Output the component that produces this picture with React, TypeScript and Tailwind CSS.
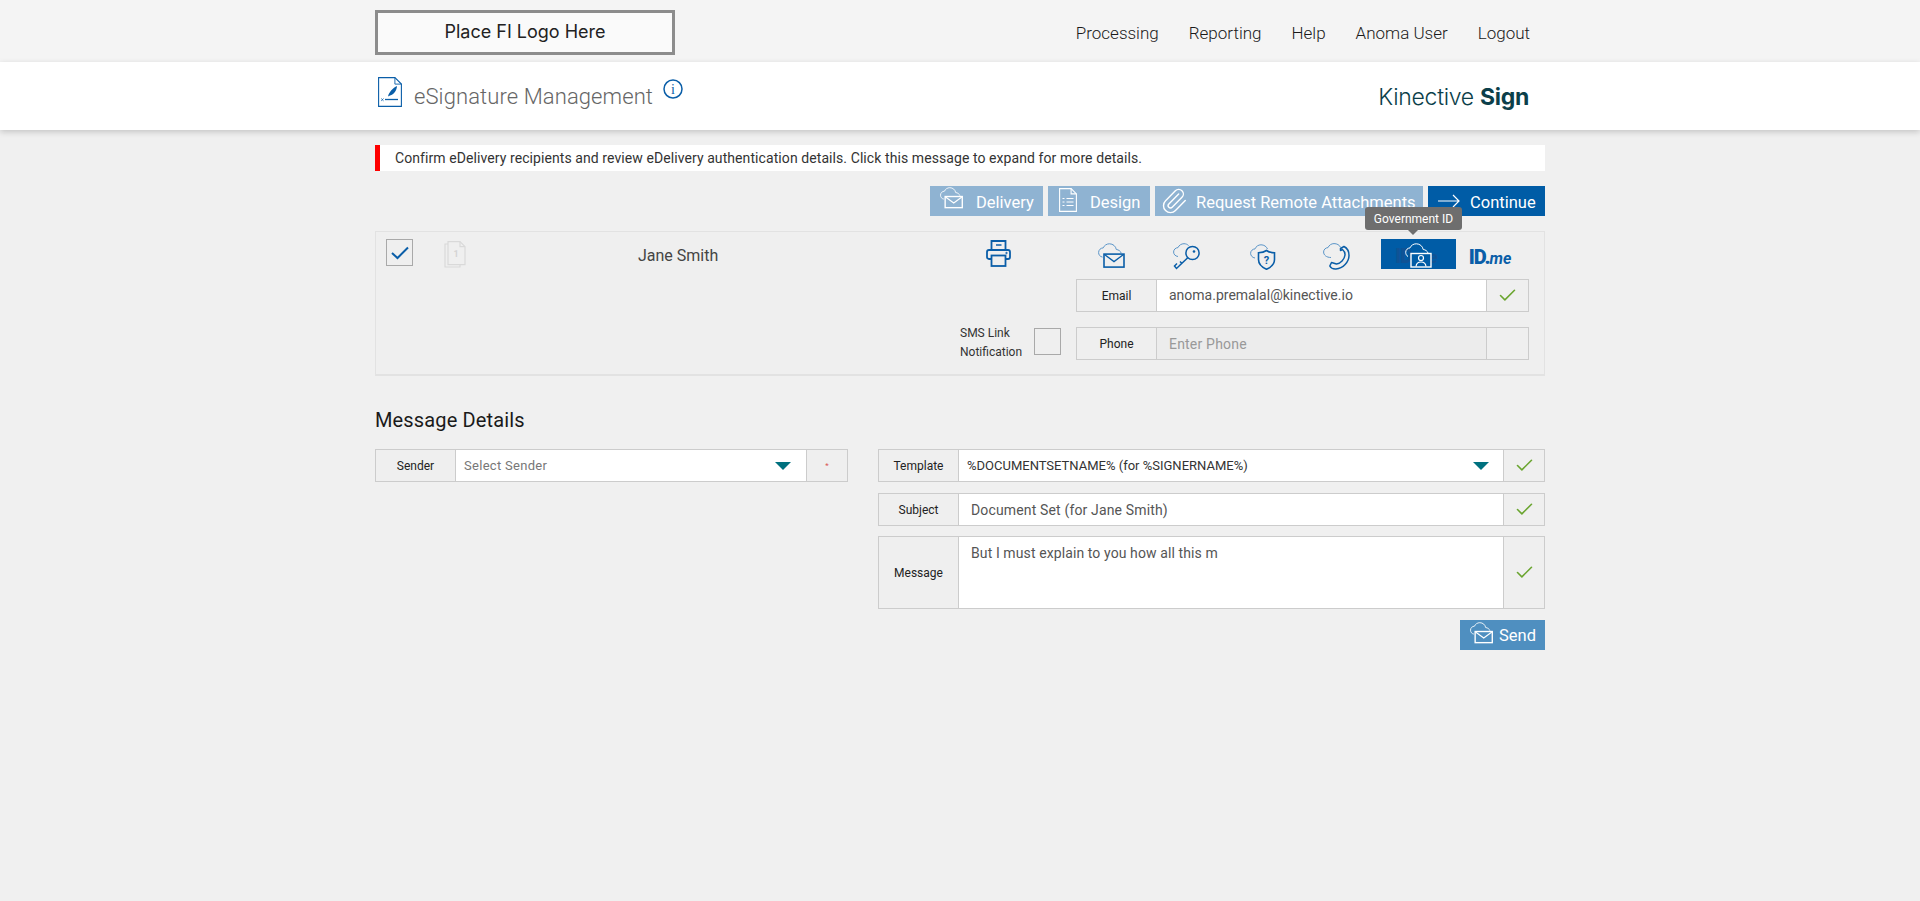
import React from "react";
import { Check, Paperclip } from "lucide-react";

const BLUE = "#0a5ea8";
const LIGHT = "#5b95c8";
const CLOUD = "M4.5 14C2 13.6.6 11.7.6 9.4.6 6.8 2.6 4.9 5.2 4.8 6.2 2.4 8.6.7 11.4.7c3.6 0 6.4 2.5 6.9 5.7 2.3.2 4.2 1.600 4.9 3.600";

function MailCloud({ color = BLUE, cloud = LIGHT, size = 28 }: { color?: string; cloud?: string; size?: number }) {
  return (
    <svg width={size} height={size * 0.9} viewBox="0 0 28 25" fill="none" stroke={color}>
      <path d={CLOUD} strokeWidth="1" stroke={cloud} />
      <rect x="6" y="11" width="20" height="13" strokeWidth="1.6" />
      <path d="M6.500 11.500 16 18.500l9.500-7" strokeWidth="1.300" />
    </svg>
  );
}

function KeyCloud() {
  return (
    <svg width="28" height="27" viewBox="0 0 28 27" fill="none" stroke={BLUE}>
      <path d="M5 13.500C2.200 13.200.600 11.200.600 9 .600 6.500 2.700 4.700 5 4.600 6 2.200 8.400.700 11 .700c1.800 0 3.500.700 4.600 1.900" strokeWidth="1" stroke={LIGHT} />
      <circle cx="19.500" cy="10" r="6.600" strokeWidth="1.500" />
      <circle cx="21" cy="8.500" r="1.300" fill={BLUE} strokeWidth="0" />
      <path d="M15 14.500 3.500 25.500 1.500 23l2.500-2.500M15 14.500 6 23M9 20.500l-2-2" strokeWidth="1.500" />
    </svg>
  );
}

function ShieldCloud() {
  return (
    <svg width="26" height="26" viewBox="0 0 26 26" fill="none" stroke={BLUE}>
      <path d="M5 14C2.200 13.600.600 11.500.600 9.300.600 6.800 2.700 5 5 4.900 6 2.400 8.400.800 11 .800c3 0 5.500 1.700 6.500 4.200" strokeWidth="1" stroke={LIGHT} />
      <path d="M16.500 6.500c2 1.500 5 2.200 8 2.200V15.500c0 4.500-3.500 7.800-8 9.800-4.500-2-8-5.300-8-9.800V8.700c3 0 6-.7 8-2.200z" strokeWidth="1.600" fill="#efefef" />
      <text x="16.500" y="20" textAnchor="middle" fontSize="11" fontWeight="700" fontFamily="Roboto, sans-serif" fill={BLUE} stroke="none">?</text>
    </svg>
  );
}

function PhoneCloud() {
  return (
    <svg width="27" height="28" viewBox="0 0 27 28" fill="none" stroke={BLUE}>
      <path d="M8 15.500C3.400 15.500.600 13 .600 10 .600 7.500 2.700 5.700 5 5.600 6 3.200 8.400 1.600 11 1.600c3 0 5.500 1.400 6.500 3.700" strokeWidth="1" stroke={LIGHT} />
      <path d="M17.500 6.500 21 4.500c3 1.500 5 5 5 9 0 6.500-6 13-13 13.500-3 .2-5.200-1-6.200-3l1.700-3.500 5 1.500c4-.5 8-4.500 8.500-9 .2-2-1-4.200-2.500-5.500l-2 1z" strokeWidth="1.500" strokeLinejoin="round" />
    </svg>
  );
}

function GovCloud() {
  return (
    <svg width="28" height="25" viewBox="0 0 28 25" fill="none" stroke="#ffffff">
      <path d="M3 13.500C1.500 12.700.700 11 .700 9.300.700 6.800 2.700 5 5 4.900 6 2.400 8.400.800 11.300.800c3.600 0 6.400 2.500 6.900 5.700 2.300.2 4.200 1.600 4.800 3.500" strokeWidth="1" />
      <rect x="6" y="10.500" width="20" height="13.500" strokeWidth="1.400" fill="#005ca6" />
      <circle cx="16" cy="15" r="2.500" strokeWidth="1.200" />
      <path d="M11 23.500c.3-3 2-4.500 5-4.500s4.700 1.500 5 4.500" strokeWidth="1.200" />
    </svg>
  );
}

function Printer() {
  return (
    <svg width="25" height="27" viewBox="0 0 25 27" fill="none" stroke={BLUE} strokeWidth="1.800">
      <path d="M5.500 10V1h14v9" />
      <path d="M10 5h5.500" strokeWidth="1.500" />
      <path d="M5.500 19H3c-1.200 0-2-.8-2-2v-5c0-1.200.8-2 2-2h19c1.200 0 2 .8 2 2v5c0 1.200-.8 2-2 2h-2.500" />
      <rect x="5.500" y="15.500" width="14" height="10.500" />
      <circle cx="20.500" cy="13" r="0.800" fill={BLUE} strokeWidth="0.600" />
    </svg>
  );
}

function SignDoc() {
  return (
    <svg width="24" height="30" viewBox="0 0 24 30" fill="none">
      <path d="M.6.600h16.300l6.500 6.500v22.300H.6z" stroke={BLUE} strokeWidth="1.100" fill="#fff" />
      <path d="M16.900.600v6.500h6.500" stroke={BLUE} strokeWidth="0.900" />
      <path d="M10 19.500c1-4.500 5-8.500 9-10.500-.3 4.500-3 8.500-7 9.500l-2 1z" fill={BLUE} />
      <path d="M7 22.500h13" stroke={BLUE} strokeWidth="1.300" />
      <path d="m3.200 21.500 2.400 2.400m0-2.400-2.400 2.400" stroke={BLUE} strokeWidth="0.800" />
    </svg>
  );
}

function PagesIcon() {
  return (
    <svg width="22" height="27" viewBox="0 0 22 27" fill="none" stroke="#d9d9d9" strokeWidth="1.200">
      <path d="M4 3H1v23h15v-2" />
      <path d="M4 .700h12l5 5v18H4z" fill="#efefef" />
      <path d="M16 .700v5h5" />
      <text x="12" y="15.500" textAnchor="middle" fontSize="9" fontWeight="700" fontFamily="Roboto, sans-serif" fill="#d4d4d4" stroke="none">1</text>
    </svg>
  );
}

function DesignIcon() {
  return (
    <svg width="18" height="24" viewBox="0 0 18 24" fill="none" stroke="#fff" strokeWidth="1.100">
      <path d="M.6.600h11.500l5.300 5.300v17.500H.6z" />
      <path d="M12.100.600v5.300h5.300" />
      <path d="M7.500 10.500h7M7.500 14h7M7.500 17.500h7M3.500 10.500h2M3.500 14h2M3.500 17.500h2" strokeWidth="1.200" />
    </svg>
  );
}

function ArrowIcon() {
  return (
    <svg width="22" height="14" viewBox="0 0 22 14" fill="none" stroke="#fff" strokeWidth="1.200">
      <path d="M0 7h21M15 1l6 6-6 6" />
    </svg>
  );
}

function Caret() {
  return (
    <svg width="16" height="8" viewBox="0 0 16 8">
      <path d="M0 0h16L8 8z" fill="#00717f" />
    </svg>
  );
}

function OkCell({ className = "" }: { className?: string }) {
  return (
    <div className={`flex items-center justify-center bg-[#efefef] border-l border-[#cccccc] ${className}`}>
      <Check size={21} color="#6aa52f" strokeWidth={1.800} />
    </div>
  );
}

function Label({ children, className = "" }: { children: React.ReactNode; className?: string }) {
  return (
    <div className={`flex items-center justify-center shrink-0 text-[12px] text-[#222] bg-[#efefef] border-r border-[#cccccc] pt-[1px] ${className}`}>
      {children}
    </div>
  );
}

function ActionButton({ children, className = "" }: { children: React.ReactNode; className?: string }) {
  return <div className={`h-[30px] flex items-center text-[16.5px] text-white ${className}`}>{children}</div>;
}

function IdMe({ className = "" }: { className?: string }) {
  return (
    <span className={`leading-none ${className}`}>
      <span className="text-[20px] font-black tracking-[-1px]">ID.</span>
      <span className="text-[16px] font-bold italic">me</span>
    </span>
  );
}

export default function App() {
  return (
    <div className="min-h-[901px] bg-[#f0f0f0] font-['Roboto',sans-serif]">
      <header className="h-[62px] bg-[#f4f4f4]">
        <div className="w-[1170px] mx-auto h-full flex items-start justify-between">
          <div className="mt-[10px] w-[300px] h-[45px] border-[3px] border-[#8c8c8c] bg-[#fafafa] flex items-center justify-center pb-[2px] text-[18px] text-[#222] font-['Inter',sans-serif]">
            Place FI Logo Here
          </div>
          <nav className="flex items-center gap-[30px] h-[68px] pr-[15px] text-[17px] font-light text-[#1a1a1a]">
            <span>Processing</span>
            <span>Reporting</span>
            <span>Help</span>
            <span>Anoma User</span>
            <span>Logout</span>
          </nav>
        </div>
      </header>

      <div className="h-[68px] bg-white shadow-[0_2px_6px_rgba(0,0,0,0.18)]">
        <div className="w-[1170px] mx-auto h-full flex items-start justify-between">
          <div className="flex items-start">
            <div className="ml-[3px] mt-[15px]"><SignDoc /></div>
            <div className="ml-[12px] mt-[21px] text-[22px] leading-[28px] font-light tracking-[0.1px] text-[#666]">eSignature Management</div>
            <svg className="ml-[10px] mt-[17px]" width="20" height="20" viewBox="0 0 20 20" fill="none">
              <circle cx="10" cy="10" r="9" stroke={BLUE} strokeWidth="1.500" />
              <text x="10" y="15" textAnchor="middle" fontSize="14" fontFamily="'Liberation Serif', serif" fill={BLUE}>i</text>
            </svg>
          </div>
          <div className="mt-[20px] pr-[16px] text-[23px] leading-[30px] text-[#0c3f4a] font-['Inter',sans-serif] font-light tracking-[-0.3px]">
            Kinective <span className="font-bold">Sign</span>
          </div>
        </div>
      </div>

      <main className="w-[1170px] mx-auto">
        <div className="mt-[15px] h-[26px] bg-white border-l-[5px] border-[#fe0000] flex items-center pl-[15px] text-[14px] text-[#333] tracking-[0.08px]">
          Confirm eDelivery recipients and review eDelivery authentication details. Click this message to expand for more details.
        </div>

        <div className="mt-[15px] flex justify-end gap-[5px]">
          <ActionButton className="w-[113px] bg-[#8fb3d2] pl-[10px] gap-[12px]"><div className="-mt-[6px]"><MailCloud color="#ffffff" cloud="#ffffff" size={24} /></div><span className="pt-[5px]">Delivery</span></ActionButton>
          <ActionButton className="w-[102px] bg-[#8fb3d2] pl-[11px] gap-[13px]"><div className="-mt-[3px]"><DesignIcon /></div><span className="pt-[5px]">Design</span></ActionButton>
          <ActionButton className="w-[268px] bg-[#8fb3d2] pl-[5px] gap-[8px]"><Paperclip size={28} color="#fff" strokeWidth={1.200} /><span className="pt-[5px] whitespace-nowrap">Request Remote Attachments</span></ActionButton>
          <ActionButton className="w-[117px] bg-[#005ca6] pl-[10px] gap-[10px]"><ArrowIcon /><span className="pt-[5px]">Continue</span></ActionButton>
        </div>

        <section className="mt-[15px] h-[145px] bg-[#efefef] border border-b-2 border-[#e2e2e2] flex items-start">
          <div className="ml-[10px] mt-[7px] w-[27px] h-[27px] shrink-0 border border-[#a9a9a9] flex items-center justify-center">
            <svg width="18" height="14" viewBox="0 0 18 14" fill="none" stroke={BLUE} strokeWidth="2"><path d="M1 7l5.500 5L17 1.500" /></svg>
          </div>
          <div className="mt-[9px] ml-[31px]"><PagesIcon /></div>
          <div className="mt-[14px] ml-[172px] whitespace-nowrap text-[16px] leading-[20px] text-[#444]">Jane Smith</div>

          <div className="ml-auto w-[115px] shrink-0 flex flex-col">
            <div className="h-[92px] pl-[26px] pt-[8px]"><Printer /></div>
            <div className="flex items-start">
              <div className="w-[74px] text-[12px] leading-[19px] text-[#333]">SMS Link<br />Notification</div>
              <div className="mt-[4px] w-[27px] h-[27px] border border-[#a9a9a9]" />
            </div>
          </div>

          <div className="mr-[14px] flex flex-col w-[455px] shrink-0">
            <div className="h-[47px] flex items-start relative">
              <div className="w-[74px] h-[30px] mt-[7px] pt-[4px] flex items-center justify-center"><MailCloud /></div>
              <div className="w-[76px] h-[30px] mt-[7px] pt-[4px] flex items-center justify-center"><KeyCloud /></div>
              <div className="w-[76px] h-[30px] mt-[7px] pt-[5px] flex items-center justify-center"><ShieldCloud /></div>
              <div className="w-[70px] h-[30px] mt-[7px] pt-[4px] flex items-center justify-center"><PhoneCloud /></div>
              <div className="ml-[10px] w-[75px] h-[30px] mt-[7px] bg-[#005ca6] flex items-center justify-center relative">
                <IdMe className="absolute left-[14px] top-[7px] text-[#0f5395]" />
                <div className="relative mt-[2px]"><GovCloud /></div>
              </div>
              <div className="w-[68px] h-[30px] mt-[7px] pt-[5px] flex items-center justify-center text-[#0a5ea8]"><IdMe /></div>
              <div className="absolute left-[290px] -top-[25px] w-[97px] h-[23px] rounded-[3px] bg-[#6e6e6e] flex items-center justify-center text-[12px] text-white whitespace-nowrap">
                Government ID
                <div className="absolute left-[43px] top-[23px] w-0 h-0 border-l-[5px] border-r-[5px] border-t-[5px] border-l-transparent border-r-transparent border-t-[#6e6e6e]" />
              </div>
            </div>
            <div className="flex ml-[1px] w-[453px] h-[33px] border border-[#cccccc]">
              <Label className="w-[80px]">Email</Label>
              <div className="flex-1 bg-white flex items-center pl-[12px] text-[14px] text-[#555]">anoma.premalal@kinective.io</div>
              <OkCell className="w-[42px]" />
            </div>
            <div className="flex ml-[1px] mt-[15px] w-[453px] h-[33px] border border-[#cccccc]">
              <Label className="w-[80px]">Phone</Label>
              <div className="flex-1 bg-[#ececec] flex items-center pl-[12px] pt-[1px] text-[14px] text-[#999] tracking-[0.2px]">Enter Phone</div>
              <div className="w-[42px] bg-[#efefef] border-l border-[#cccccc]" />
            </div>
          </div>
        </section>

        <h2 className="mt-[31px] h-[26px] leading-[26px] text-[20px] font-normal text-[#1a1a1a] tracking-[0.15px]">Message Details</h2>

        <div className="mt-[16px] flex gap-[30px] items-start">
          <div className="w-[473px] h-[33px] flex border border-[#cccccc]">
            <Label className="w-[80px]">Sender</Label>
            <div className="flex-1 bg-white flex items-center justify-between pl-[8px] pr-[15px] text-[13px] text-[#777] tracking-[0.3px]"><span>Select Sender</span><Caret /></div>
            <div className="w-[41px] bg-[#efefef] border-l border-[#cccccc] flex items-center justify-center text-[8px] text-[#d9534f]">*</div>
          </div>

          <div className="w-[667px] flex flex-col">
            <div className="h-[33px] flex border border-[#cccccc]">
              <Label className="w-[80px]">Template</Label>
              <div className="flex-1 bg-white flex items-center justify-between pl-[8px] pr-[14px] text-[13px] text-[#333]"><span>%DOCUMENTSETNAME% (for %SIGNERNAME%)</span><Caret /></div>
              <OkCell className="w-[41px]" />
            </div>
            <div className="mt-[11px] h-[33px] flex border border-[#cccccc]">
              <Label className="w-[80px]">Subject</Label>
              <div className="flex-1 bg-white flex items-center pl-[12px] pt-[1px] text-[14px] text-[#555] tracking-[0.15px]">Document Set (for Jane Smith)</div>
              <OkCell className="w-[41px]" />
            </div>
            <div className="mt-[10px] h-[73px] flex border border-[#cccccc]">
              <Label className="w-[80px]">Message</Label>
              <div className="flex-1 bg-white pl-[12px] pt-[6px] text-[14px] leading-[20px] text-[#555] tracking-[0.1px]">But I must explain to you how all this m</div>
              <OkCell className="w-[41px]" />
            </div>
            <div className="mt-[11px] flex justify-end">
              <div className="w-[85px] h-[30px] bg-[#4f8fc0] flex items-center pl-[10px] gap-[5px] text-[16.5px] text-white">
                <div className="-mt-[4px]"><MailCloud color="#ffffff" cloud="#ffffff" size={24} /></div><span className="pt-[3px]">Send</span>
              </div>
            </div>
          </div>
        </div>
      </main>
    </div>
  );
}
